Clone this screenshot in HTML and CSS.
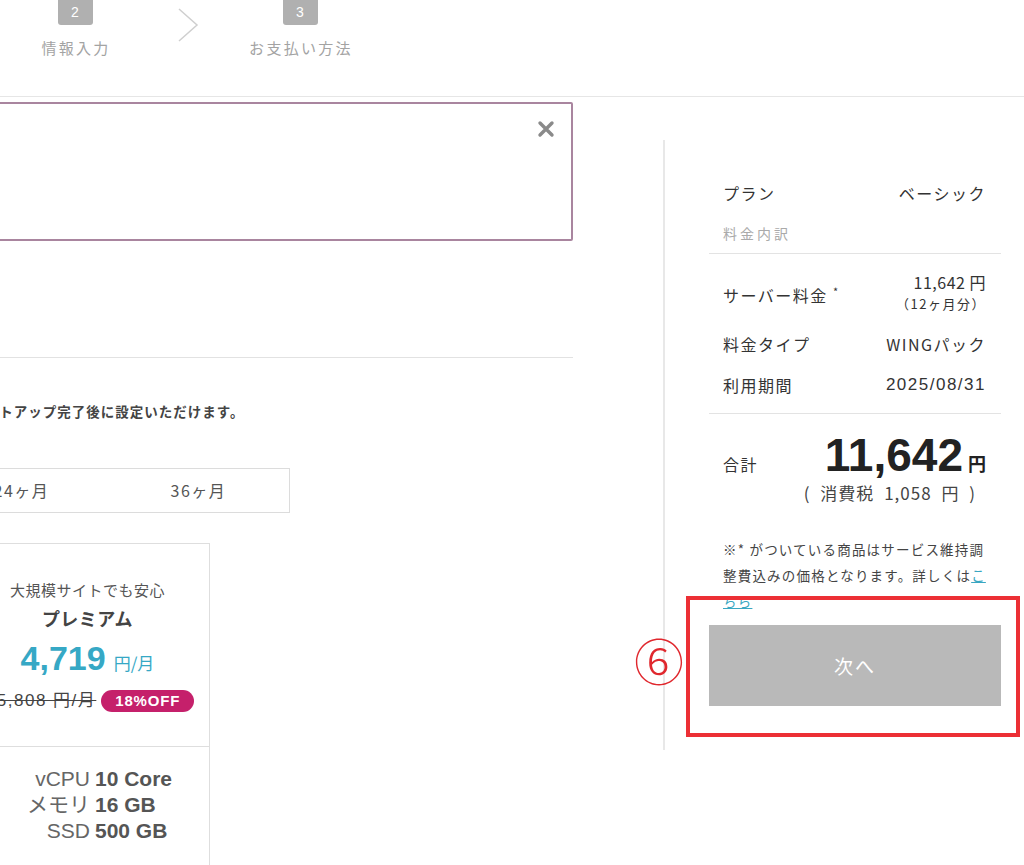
FILE: index.html
```html
<!DOCTYPE html>
<html lang="ja">

<head>
    <meta charset="UTF-8" />
    <meta name="viewport" content="width=device-width, initial-scale=1.0" />
    <title>お申し込み</title>
    <link rel="stylesheet" href="styles.css">
</head>

<body>
    <header class="steps">
        <div class="step">
            <span class="step-num">2</span>
            <span class="step-label">情報入力</span>
        </div>
        <div class="step-arrow">
            <svg width="24" height="36" viewBox="0 0 24 36">
                <path d="M3 2 L21 18 L3 34" fill="none" stroke="#cfcfcf" stroke-width="1.5" />
            </svg>
        </div>
        <div class="step">
            <span class="step-num">3</span>
            <span class="step-label">お支払い方法</span>
        </div>
    </header>

    <main class="page">
        <section class="form-col">
            <div class="notice">
                <button class="notice-close" type="button" aria-label="閉じる">
                    <svg width="18" height="18" viewBox="0 0 18 18">
                        <path d="M3 3 L15 15 M15 3 L3 15" stroke="#8a8a8a" stroke-width="3.4" stroke-linecap="round" />
                    </svg>
                </button>
            </div>

            <hr class="divider" />

            <p class="hint">サーバーのセットアップ完了後に設定いただけます。</p>

            <div class="period">
                <span class="period-item">12ヶ月</span>
                <span class="period-item">24ヶ月</span>
                <span class="period-item">36ヶ月</span>
            </div>

            <div class="plans">
                <div class="plan">
                    <div class="plan-head">
                        <p class="plan-catch">大規模サイトでも安心</p>
                        <p class="plan-name">プレミアム</p>
                        <p class="plan-price">4,719<span class="plan-unit">円/月</span></p>
                        <p class="plan-old"><s>5,808 円/月</s><span class="plan-off">18%OFF</span></p>
                    </div>
                    <dl class="plan-spec">
                        <dt>vCPU</dt><dd>10 Core</dd>
                        <dt>メモリ</dt><dd>16 GB</dd>
                        <dt>SSD</dt><dd>500 GB</dd>
                    </dl>
                </div>
            </div>
        </section>

        <aside class="summary-col">
            <div class="summary">
                <div class="row">
                    <span>プラン</span>
                    <span>ベーシック</span>
                </div>
                <p class="summary-sub">料金内訳</p>

                <div class="summary-list">
                    <div class="row">
                        <span>サーバー料金 <sup>*</sup></span>
                        <span class="row-value">11,642 円<small>（12ヶ月分）</small></span>
                    </div>
                    <div class="row">
                        <span>料金タイプ</span>
                        <span>WINGパック</span>
                    </div>
                    <div class="row">
                        <span>利用期間</span>
                        <span class="row-date">2025/08/31</span>
                    </div>
                </div>

                <div class="total">
                    <span class="total-label">合計</span>
                    <span class="total-price">11,642<span class="total-yen">円</span></span>
                </div>
                <p class="tax">( 消費税 1,058 円 )</p>

                <p class="note">※* がついている商品はサービス維持調整費込みの価格となります。詳しくは<a href="#">こちら</a></p>

                <button class="next" type="button" disabled>次へ</button>

                <div class="mark"></div>
                <span class="mark-num">⑥</span>
            </div>
        </aside>
    </main>
</body>

</html>
```

FILE: styles.css
```css
* {
    box-sizing: border-box;
}

body {
    margin: 0;
    width: 1024px;
    height: 865px;
    overflow: hidden;
    background: #fff;
    color: #333;
    font-family: 'Liberation Sans', 'Noto Sans CJK JP', sans-serif;
}

p {
    margin: 0;
}

/* steps */

.steps {
    display: flex;
    height: 97px;
    border-bottom: 1px solid #e6e6e6;
}

.step {
    width: 150px;
    display: flex;
    flex-direction: column;
    align-items: center;
}

.step-num {
    width: 35px;
    height: 35px;
    margin-top: -10px;
    padding-top: 10px;
    background: #b0b0b0;
    border-radius: 3px;
    color: #fff;
    font-size: 14px;
    text-align: center;
    line-height: 24px;
}

.step-label {
    margin-top: 12px;
    padding-left: 2px;
    font-size: 15px;
    letter-spacing: 2.3px;
    color: #a3a3a3;
    font-family: 'Noto Sans CJK JP', sans-serif;
}

.step-arrow {
    width: 75px;
    display: flex;
    justify-content: center;
    padding-top: 7px;
}

/* layout */

.page {
    display: flex;
}

.form-col {
    width: 597px;
    margin-left: -24px;
}

.summary-col {
    width: 361px;
    height: 610px;
    margin-left: 90px;
    margin-top: 43px;
    border-left: 2px solid #e8e8e8;
    padding-left: 44px;
}

/* left column */

.notice {
    position: relative;
    height: 139px;
    margin-top: 5px;
    border: 2px solid #a9859f;
    border-radius: 2px;
}

.notice-close {
    position: absolute;
    top: 16px;
    right: 16px;
    border: none;
    background: none;
    padding: 0;
}

.divider {
    margin: 116px 0 0;
    border: none;
    border-top: 1px solid #e2e2e2;
}

.hint {
    margin-top: 43px;
    margin-left: -78px;
    font-size: 13.5px;
    font-weight: bold;
    letter-spacing: 1px;
    line-height: 20px;
    color: #444;
    font-family: 'Noto Sans CJK JP', sans-serif;
}

.period {
    display: flex;
    width: 535px;
    height: 45px;
    margin-top: 47px;
    margin-left: -221px;
    border: 1px solid #dcdcdc;
}

.period-item {
    width: 177px;
    display: flex;
    align-items: center;
    justify-content: center;
    padding-bottom: 2px;
    font-size: 16px;
    letter-spacing: 1.5px;
    color: #555;
    font-family: 'Noto Sans CJK JP', sans-serif;
}

.plans {
    display: flex;
    margin-top: 30px;
    margin-left: -10px;
}

.plan {
    width: 244px;
    height: 330px;
    border: 1px solid #dedede;
    border-left: none;
}

.plan-head {
    height: 203px;
    border-bottom: 1px solid #dedede;
    padding-top: 35px;
    text-align: center;
    font-family: 'Noto Sans CJK JP', sans-serif;
}

.plan-catch {
    font-size: 15px;
    letter-spacing: 0.5px;
    line-height: 22px;
    color: #555;
}

.plan-name {
    margin-top: 4px;
    font-size: 18px;
    font-weight: bold;
    letter-spacing: 0.5px;
    line-height: 26px;
    color: #444;
}

.plan-price {
    margin-top: 7px;
    font-family: 'Liberation Sans', sans-serif;
    font-size: 34px;
    font-weight: bold;
    line-height: 40px;
    color: #36a8c5;
}

.plan-unit {
    margin-left: 8px;
    font-family: 'Noto Sans CJK JP', sans-serif;
    font-size: 17px;
    font-weight: normal;
}

.plan-old {
    display: flex;
    align-items: center;
    justify-content: center;
    gap: 5px;
    margin-top: 6px;
    padding-left: 16px;
    font-family: 'Liberation Sans', 'Noto Sans CJK JP', sans-serif;
    font-size: 17px;
    letter-spacing: 1.5px;
    line-height: 24px;
    color: #444;
}

.plan-off {
    padding: 0 14px;
    background: #c5206b;
    border-radius: 11px;
    color: #fff;
    font-family: 'Liberation Sans', sans-serif;
    font-size: 15px;
    font-weight: bold;
    letter-spacing: 0.8px;
    line-height: 22px;
}

.plan-spec {
    display: grid;
    grid-template-columns: 124px 1fr;
    column-gap: 5px;
    margin: 19px 0 0;
    font-size: 21px;
    line-height: 26px;
}

.plan-spec dt {
    text-align: right;
    color: #666;
}

.plan-spec dd {
    margin: 0;
    font-weight: bold;
    color: #555;
}

/* summary */

.summary {
    position: relative;
    width: 292px;
    padding-top: 41px;
    font-family: 'Noto Sans CJK JP', sans-serif;
}

.row {
    display: flex;
    justify-content: space-between;
    align-items: center;
    padding: 0 15px 0 14px;
    font-size: 16px;
    letter-spacing: 1.5px;
    line-height: 24px;
    color: #333;
}

.row sup {
    font-size: 11px;
}

.row-date {
    font-family: 'Liberation Sans', sans-serif;
    font-size: 17px;
}

.summary-sub {
    margin-top: 18px;
    padding-left: 14px;
    font-size: 14px;
    letter-spacing: 3px;
    line-height: 20px;
    color: #aaa;
}

.summary-list {
    display: flex;
    flex-direction: column;
    gap: 17px;
    margin-top: 10px;
    padding: 17px 0 16px;
    border-top: 1px solid #e3e3e3;
    border-bottom: 1px solid #e3e3e3;
}

.row-value {
    display: flex;
    flex-direction: column;
    align-items: flex-end;
    letter-spacing: 0.5px;
    line-height: 22px;
}

.row-value small {
    font-size: 13px;
    letter-spacing: 1.5px;
    line-height: 22px;
}

.total {
    display: flex;
    align-items: baseline;
    justify-content: space-between;
    padding: 18px 15px 0 14px;
}

.total-label {
    font-size: 16px;
    letter-spacing: 1.5px;
}

.total-price {
    font-family: 'Liberation Sans', sans-serif;
    font-size: 46px;
    font-weight: bold;
    line-height: 46px;
    color: #222;
}

.total-yen {
    margin-left: 5px;
    font-family: 'Noto Sans CJK JP', sans-serif;
    font-size: 18px;
}

.tax {
    margin-top: -5px;
    padding-right: 25px;
    text-align: right;
    font-size: 17px;
    letter-spacing: 1px;
    word-spacing: 5px;
    line-height: 24px;
    color: #444;
}

.note {
    width: 284px;
    margin-top: 31px;
    padding-left: 14px;
    font-size: 13.5px;
    letter-spacing: 1.2px;
    line-height: 26px;
    color: #444;
}

.note a {
    color: #39a7c2;
}

.next {
    display: block;
    width: 292px;
    height: 81px;
    margin-top: 11px;
    border: none;
    background: #b9b9b9;
    color: #fff;
    font-family: 'Noto Sans CJK JP', sans-serif;
    font-size: 19px;
    letter-spacing: 2px;
}

/* annotation */

.mark {
    position: absolute;
    left: -23px;
    bottom: -31px;
    width: 334px;
    height: 141px;
    border: 4px solid #ec2f35;
}

.mark-num {
    position: absolute;
    left: -75px;
    bottom: 17px;
    font-size: 50px;
    line-height: 60px;
    font-weight: 300;
    color: #e0282e;
}
```
